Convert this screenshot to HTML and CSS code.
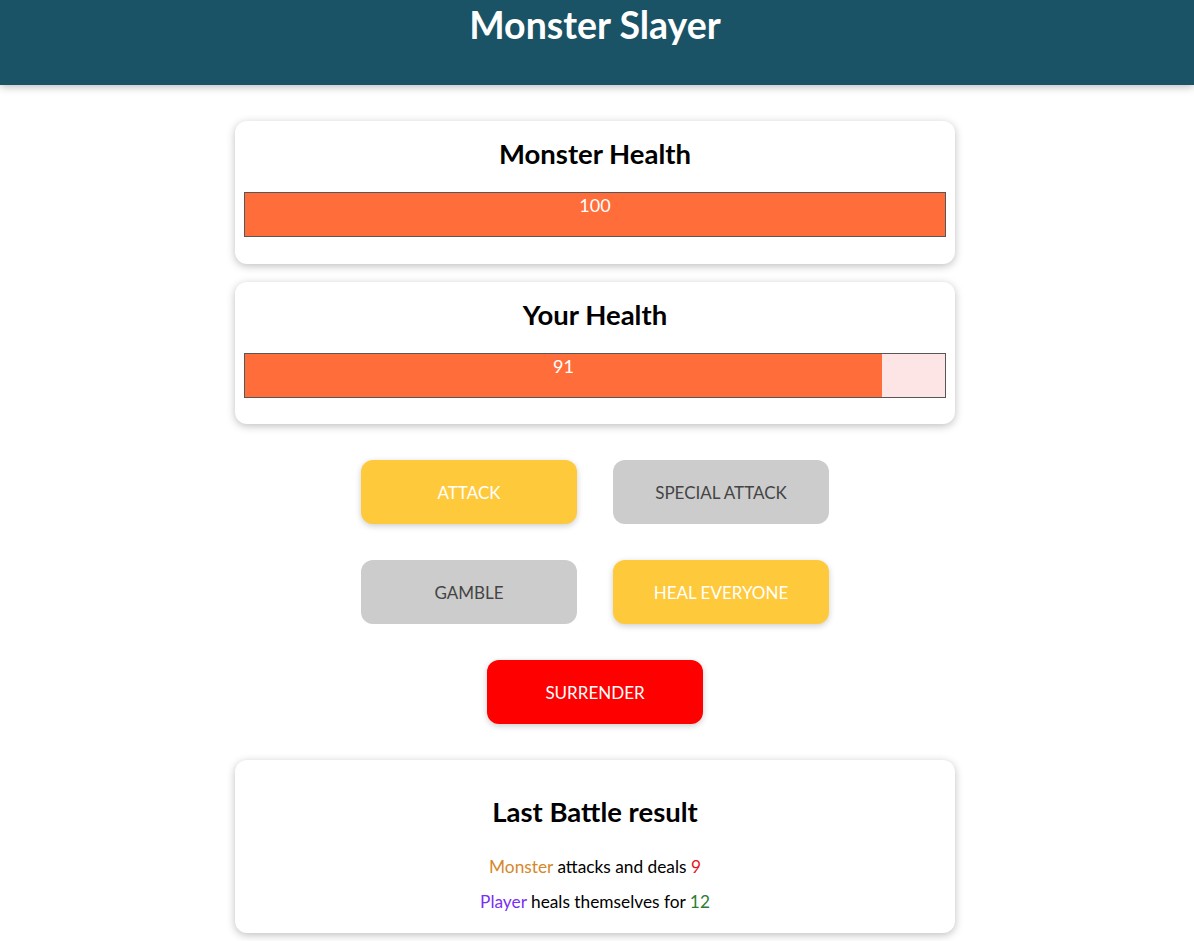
FILE: index.html
```html
<!DOCTYPE html>
<html lang="en">
<head>
<meta charset="utf-8">
<title>Monster Slayer</title>
<link rel="stylesheet" href="styles.css">
</head>
<body>
<header class="header">
  <h1 class="header__title">Monster Slayer</h1>
</header>
<main class="game">
  <section class="card card--health">
    <h2 class="card__title">Monster Health</h2>
    <div class="healthbar">
      <div class="healthbar__value" style="width: 100%">100</div>
    </div>
  </section>
  <section class="card card--health">
    <h2 class="card__title">Your Health</h2>
    <div class="healthbar">
      <div class="healthbar__value" style="width: 91%">91</div>
    </div>
  </section>
  <section class="controls">
    <button class="btn btn--primary">ATTACK</button>
    <button class="btn btn--disabled">SPECIAL ATTACK</button>
    <button class="btn btn--disabled">GAMBLE</button>
    <button class="btn btn--primary">HEAL EVERYONE</button>
    <button class="btn btn--danger">SURRENDER</button>
  </section>
  <section class="card card--log">
    <h2 class="card__title card__title--log">Last Battle result</h2>
    <ul class="log">
      <li class="log__item"><span class="log__monster">Monster</span> attacks and deals <span class="log__damage">9</span></li>
      <li class="log__item"><span class="log__player">Player</span> heals themselves for <span class="log__heal">12</span></li>
    </ul>
  </section>
</main>
</body>
</html>
```

FILE: styles.css
```css
* {
  box-sizing: border-box;
}

html {
  font-family: "Lato", "Open Sans", sans-serif;
}

body {
  margin: 0;
  background: #ffffff;
  color: #000;
}

.header {
  height: 85px;
  background-color: #1a5366;
  color: #ffffff;
  text-align: center;
  padding: 3px 4px 0 0;
  box-shadow: 0 2px 8px rgba(0, 0, 0, 0.26);
}

.header__title {
  margin: 0;
  font-size: 37.5px;
  line-height: 44px;
  font-weight: 700;
}

.game {
  width: 720px;
  margin: 36px 0 0 calc(50% - 362px);
}

.card {
  background: #fff;
  text-align: center;
  padding: 8px 9px;
  border-radius: 12px;
  box-shadow: 0 2px 8px rgba(0, 0, 0, 0.26);
  margin: 18px 0;
}

.card:first-child {
  margin-top: 0;
}

.card__title {
  margin: 3px 4px 0;
  font-size: 27.5px;
  line-height: 44px;
  font-weight: 700;
}

.healthbar {
  height: 45px;
  border: 1px solid #575757;
  background: #fde5e5;
  margin: 16px 0 18.5px;
}

.healthbar__value {
  height: 100%;
  background-color: #ff6d3a;
  color: #ffffff;
  font-size: 18px;
  line-height: 25px;
  text-align: center;
}

.controls {
  display: flex;
  flex-wrap: wrap;
  justify-content: center;
}

.btn {
  font: inherit;
  font-size: 17px;
  width: 216px;
  height: 64px;
  margin: 18px;
  border: none;
  border-radius: 12px;
  cursor: pointer;
}

.btn--primary {
  background-color: #ffc93c;
  color: #ffffff;
  box-shadow: 0 2px 6px rgba(0, 0, 0, 0.2);
}

.btn--disabled {
  background-color: #cccccc;
  color: #444444;
}

.btn--danger {
  background-color: #ff0000;
  color: #ffffff;
  box-shadow: 0 2px 6px rgba(0, 0, 0, 0.2);
}

.card--log {
  margin-top: 18px;
}

.card__title--log {
  margin-top: 22px;
}

.log {
  list-style: none;
  margin: 15px 0 6px;
  padding: 0;
}

.log__item {
  font-size: 17.3px;
  line-height: 35px;
}

.log__monster {
  color: #d4882a;
}

.log__player {
  color: #7a2ff5;
}

.log__damage {
  color: #e8141c;
}

.log__heal {
  color: #2e7d32;
}
```
